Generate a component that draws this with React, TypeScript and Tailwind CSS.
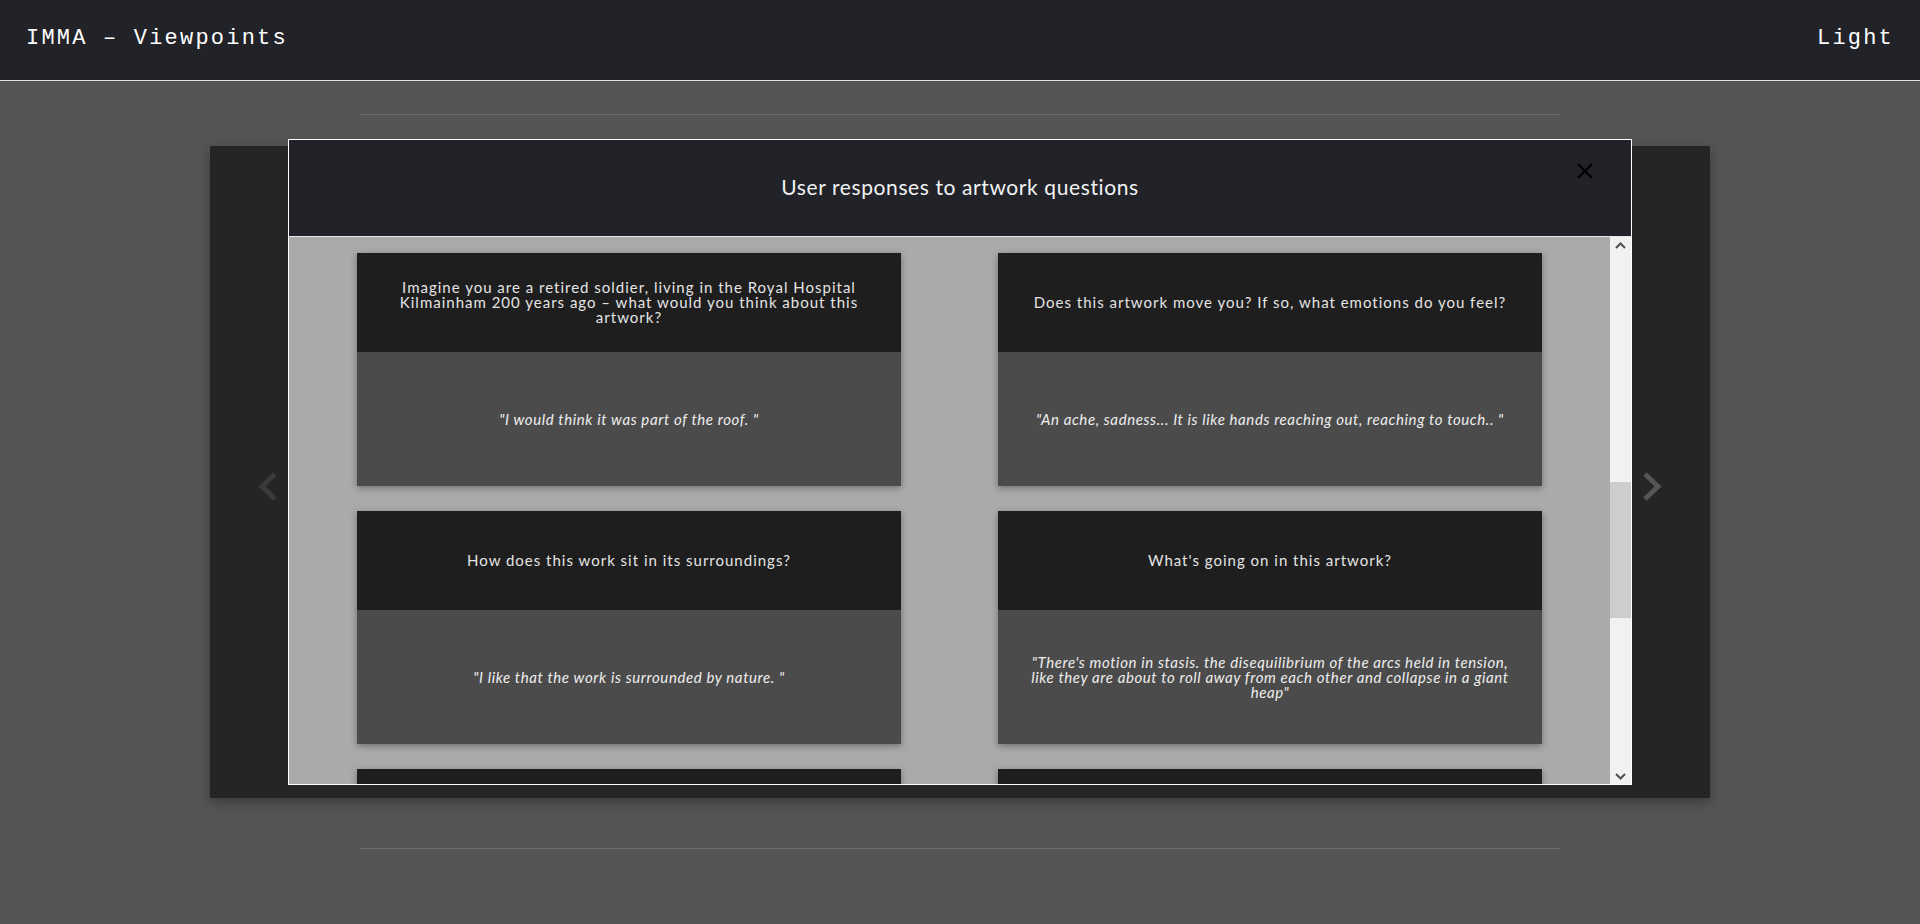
import type { ReactNode } from 'react';

type Response = { question: string; answer: string };

const RESPONSES: Response[] = [
  {
    question:
      'Imagine you are a retired soldier, living in the Royal Hospital Kilmainham 200 years ago – what would you think about this artwork?',
    answer: '"I would think it was part of the roof. "',
  },
  {
    question: 'Does this artwork move you? If so, what emotions do you feel?',
    answer: '"An ache, sadness... It is like hands reaching out, reaching to touch.. "',
  },
  {
    question: 'How does this work sit in its surroundings?',
    answer: '"I like that the work is surrounded by nature. "',
  },
  {
    question: "What's going on in this artwork?",
    answer:
      '"There\'s motion in stasis. the disequilibrium of the arcs held in tension, like they are about to roll away from each other and collapse in a giant heap"',
  },
  { question: 'What materials do you think were used?', answer: '"Steel. "' },
  { question: 'What would you call this artwork?', answer: '"Arches. "' },
];

function Chevron({ dir, color }: { dir: 'left' | 'right'; color: string }) {
  const points = dir === 'left' ? '17,3 4,15.5 17,28' : '2,3 15,15.5 2,28';
  return (
    <svg width="19" height="31" viewBox="0 0 19 31" className="block">
      <polyline points={points} fill="none" stroke={color} strokeWidth="5" />
    </svg>
  );
}

function ResponseCard({ item }: { item: Response }) {
  return (
    <div className="w-[544px] h-[233px] shrink-0 flex flex-col shadow-[0_2px_7px_rgba(0,0,0,0.35)]">
      <div className="h-[99px] bg-[#1e1e1e] flex items-center justify-center px-[34px] text-center text-[15px] leading-[15px] tracking-[1px] text-[#e4e4e4]">
        {item.question}
      </div>
      <div className="flex-1 bg-[#4b4b4b] flex items-center justify-center px-[22px] text-center text-[15px] leading-[15px] tracking-[0.6px] italic text-[#eeeeee]">
        {item.answer}
      </div>
    </div>
  );
}

function FakeScrollbar() {
  return (
    <div className="w-[21px] shrink-0 bg-[#f1f1f1] flex flex-col">
      <div className="h-[16px] flex items-center justify-center">
        <svg width="11" height="7" viewBox="0 0 11 7">
          <polyline points="1,6 5.5,1.5 10,6" fill="none" stroke="#505050" strokeWidth="2" />
        </svg>
      </div>
      <div className="h-[229px]" />
      <div className="h-[136px] bg-[#cdcdcd]" />
      <div className="flex-1" />
      <div className="h-[16px] flex items-center justify-center">
        <svg width="11" height="7" viewBox="0 0 11 7">
          <polyline points="1,1 5.5,5.5 10,1" fill="none" stroke="#505050" strokeWidth="2" />
        </svg>
      </div>
    </div>
  );
}

function Modal({ title, children }: { title: string; children: ReactNode }) {
  return (
    <div className="fixed top-[139px] left-0 right-0 mx-auto w-[1344px] h-[646px] border border-white flex flex-col z-50">
      <div className="relative h-[97px] shrink-0 bg-[#212329] border-b border-[#e6e6e6] flex items-center justify-center">
        <h2 className="text-[21px] text-[#f2f2f2] tracking-[0.6px] -mt-[2px]">{title}</h2>
        <button className="absolute left-[1288px] top-[23px] w-[16px] h-[16px]">
          <svg width="16" height="16" viewBox="0 0 16 16" className="block">
            <path d="M1 1 L15 15 M15 1 L1 15" stroke="#000" strokeWidth="2.2" />
          </svg>
        </button>
      </div>
      <div className="flex-1 flex min-h-0">{children}</div>
    </div>
  );
}

export default function App() {
  return (
    <div className="min-h-[924px] bg-[#555555] font-['Lato','Open_Sans',sans-serif]">
      <header className="h-[81px] bg-[#212329] border-b border-[#e0e0e0] flex items-center justify-between pl-[26px] pr-[26px] font-['Liberation_Mono',monospace] text-[22px] tracking-[2.2px] text-white">
        <span className="-mt-[3px]">IMMA – Viewpoints</span>
        <span className="-mt-[3px]">Light</span>
      </header>

      <main className="flex flex-col items-center">
        <div className="mt-[33px] w-[1200px] h-px bg-[#6b6b6b]" />
        <div className="mt-[31px] w-[1500px] h-[652px] bg-[#252525] shadow-[0_4px_12px_rgba(0,0,0,0.35)] flex items-center justify-between px-[48px] pt-[28px]">
          <Chevron dir="left" color="#3a3a3a" />
          <Chevron dir="right" color="#555555" />
        </div>
        <div className="mt-[50px] w-[1200px] h-px bg-[#6b6b6b]" />
      </main>

      <Modal title="User responses to artwork questions">
        <div className="flex-1 overflow-hidden bg-[#aaaaaa] pt-[16px] px-[68px]">
          <div className="grid grid-cols-[544px_544px] justify-between gap-y-[25px]">
            {RESPONSES.map((r) => (
              <ResponseCard key={r.question} item={r} />
            ))}
          </div>
        </div>
        <FakeScrollbar />
      </Modal>
    </div>
  );
}
